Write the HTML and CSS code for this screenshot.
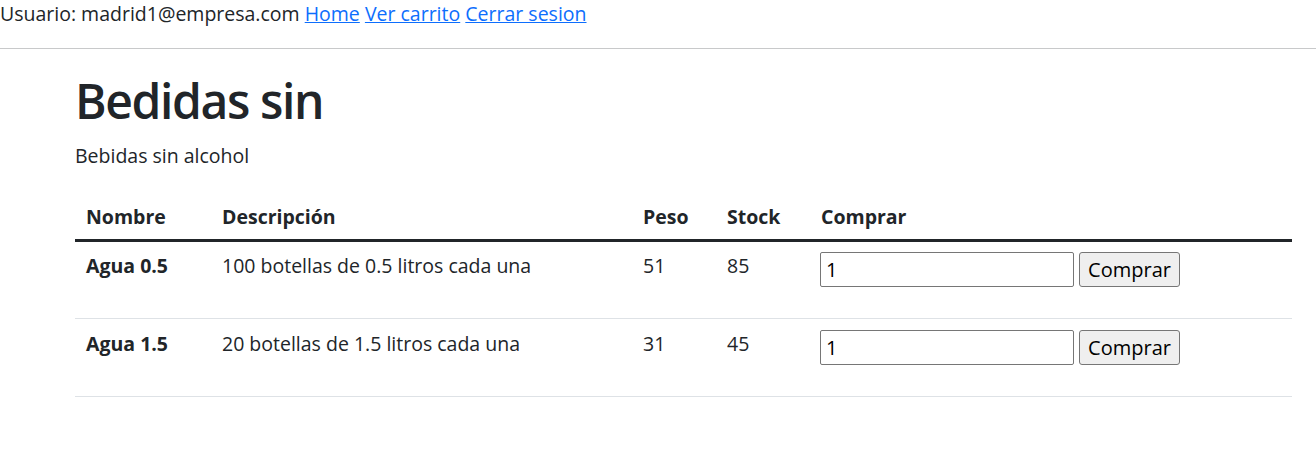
FILE: index.html
```html
<!DOCTYPE html>
<html>

<head>
  <meta content="width=device-width, initial-scale=1">
  <link rel="stylesheet" href="styles.css">
</head>

<body>
  <div class="userbar">
    Usuario: madrid1@empresa.com <a href="#">Home</a> <a href="#">Ver carrito</a> <a href="#">Cerrar sesion</a>
  </div>
  <hr class="divider">

  <div class="content">
    <h1 class="title">Bedidas sin</h1>
    <p class="subtitle">Bebidas sin alcohol</p>

    <table class="products">
      <col class="c-name">
      <col class="c-desc">
      <col class="c-peso">
      <col class="c-stock">
      <col class="c-buy">
      <thead>
        <tr>
          <th>Nombre</th>
          <th>Descripción</th>
          <th>Peso</th>
          <th>Stock</th>
          <th>Comprar</th>
        </tr>
      </thead>
      <tbody>
        <tr>
          <th>Agua 0.5</th>
          <td>100 botellas de 0.5 litros cada una</td>
          <td>51</td>
          <td>85</td>
          <td>
            <form class="buy">
              <input class="qty" type="text" value="1">
              <button class="buy-btn" type="button">Comprar</button>
            </form>
          </td>
        </tr>
        <tr>
          <th>Agua 1.5</th>
          <td>20 botellas de 1.5 litros cada una</td>
          <td>31</td>
          <td>45</td>
          <td>
            <form class="buy">
              <input class="qty" type="text" value="1">
              <button class="buy-btn" type="button">Comprar</button>
            </form>
          </td>
        </tr>
      </tbody>
    </table>
  </div>
</body>

</html>
```

FILE: styles.css
```css
body {
  margin: 0;
  font-family: "Open Sans", "Noto Sans", sans-serif;
  color: #212529;
  background: #fff;
}

a {
  color: #0d6efd;
}

.userbar {
  font-size: 19.5px;
  line-height: 28px;
}

.divider {
  margin: 20px 0 0;
  border: 0;
  border-top: 1px solid #c8c9ca;
}

.content {
  padding: 0 24px 0 75px;
}

.title {
  margin: 21px 0 10px;
  font-size: 48px;
  font-weight: 600;
  line-height: 62px;
  letter-spacing: -1.4px;
}

.subtitle {
  margin: 0 0 23px;
  font-size: 19.5px;
  line-height: 27px;
}

.products {
  width: 100%;
  border-collapse: collapse;
  table-layout: fixed;
  font-size: 19.5px;
  line-height: 27px;
}

.c-name { width: 136px; }
.c-desc { width: 421px; }
.c-peso { width: 84px; }
.c-stock { width: 94px; }

.products th,
.products td {
  padding: 10px 11px;
  text-align: left;
  vertical-align: top;
}

.products thead th {
  padding: 11px 11px 9px;
  border-bottom: 3px solid #212529;
}

.products tbody tr {
  border-bottom: 1px solid #dee2e6;
}

.products tbody tr + tr th,
.products tbody tr + tr td {
  padding-top: 11px;
}

.buy {
  display: flex;
  gap: 5px;
  margin: 0 0 21px;
}

.qty {
  box-sizing: border-box;
  width: 254px;
  height: 35px;
  margin: 0 0 0 -1px;
  padding: 1px 5px;
  border: 1px solid #767676;
  border-radius: 2px;
  font: inherit;
  font-size: 20px;
  color: #000;
}

.buy-btn {
  box-sizing: border-box;
  width: 101px;
  height: 35px;
  padding: 0 6px;
  border: 1px solid #767676;
  border-radius: 3px;
  background: #efefef;
  font: inherit;
  font-size: 20px;
  color: #000;
}
```
